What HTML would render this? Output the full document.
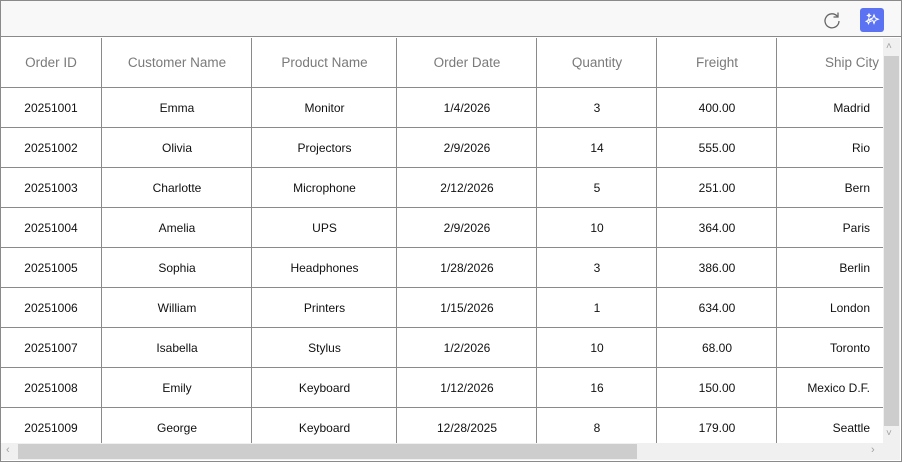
<!DOCTYPE html>
<html><head><style>
*{margin:0;padding:0;box-sizing:border-box}
body{width:902px;height:462px;background:#fff;font-family:"Liberation Sans",sans-serif;position:relative;overflow:hidden}
.frame{position:absolute;left:0;top:0;width:902px;height:462px;border:1px solid #8a8a8a}
.tb{position:absolute;left:1px;top:1px;width:900px;height:36px;background:#f8f8f8;border-bottom:1px solid #8a8a8a}
.grid{position:absolute;left:1px;top:38px;width:882px;height:405px;overflow:hidden}
.h{position:absolute;top:0;height:50px;line-height:50px;font-size:13.5px;color:#7a7a7a;text-align:center}
.c{position:absolute;height:40px;line-height:40px;font-size:12px;color:#111;text-align:center}
.vl{position:absolute;top:0;width:1px;height:405px;background:#8a8a8a}
.hl{position:absolute;left:0;width:882px;height:1px;background:#8a8a8a}
</style></head><body>
<div class="frame"></div>
<div class="tb">
<svg style="position:absolute;left:821px;top:9px" width="20" height="20" viewBox="0 0 20 20"><path d="M15.5 6.5A7 7 0 1 0 17 11" fill="none" stroke="#666" stroke-width="1.3"/><path d="M16 2.5v4.5h-4.5" fill="none" stroke="#666" stroke-width="1.3"/></svg>
<div style="position:absolute;left:859px;top:7px;width:24px;height:24px;background:#5b72f2;border-radius:3px"></div>
<svg style="position:absolute;left:859px;top:7px" width="24" height="24" viewBox="0 0 24 24" fill="none" stroke="#fff" stroke-width="1.1"><path d="M14 7l1.2 3 3 1.2-3 1.2-1.2 3-1.2-3-3-1.2 3-1.2z"/><path d="M8.5 11l.7 1.6 1.6.7-1.6.7-.7 1.6-.7-1.6-1.6-.7 1.6-.7z"/><path d="M9 6l.5 1 1 .5-1 .5-.5 1-.5-1-1-.5 1-.5z"/></svg>
</div>
<div class="grid" id="g"></div>
<div style="position:absolute;left:883px;top:38px;width:17px;height:405px;background:#f0f0f0"></div>
<div style="position:absolute;left:884px;top:56px;width:15px;height:370px;background:#cdcdcd"></div>
<div style="position:absolute;left:886px;top:41px;font-size:10px;color:#a0a0a0">&#708;</div>
<div style="position:absolute;left:886px;top:428px;font-size:10px;color:#a0a0a0">&#709;</div>
<div style="position:absolute;left:1px;top:443px;width:899px;height:17px;background:#f0f0f0"></div>
<div style="position:absolute;left:18px;top:444px;width:619px;height:15px;background:#cdcdcd"></div>
<div style="position:absolute;left:6px;top:444px;font-size:11px;color:#a0a0a0">&#8249;</div>
<div style="position:absolute;left:871px;top:444px;font-size:11px;color:#a0a0a0">&#8250;</div>
<script>
var g=document.getElementById('g');
var cols=[[0,100],[101,150],[251,145],[396,140],[536,120],[656,120],[776,120]];
var hd=['Order ID','Customer Name','Product Name','Order Date','Quantity','Freight','Ship City'];
var rows=[['20251001','Emma','Monitor','1/4/2026','3','400.00','Madrid'],['20251002','Olivia','Projectors','2/9/2026','14','555.00','Rio'],['20251003','Charlotte','Microphone','2/12/2026','5','251.00','Bern'],['20251004','Amelia','UPS','2/9/2026','10','364.00','Paris'],['20251005','Sophia','Headphones','1/28/2026','3','386.00','Berlin'],['20251006','William','Printers','1/15/2026','1','634.00','London'],['20251007','Isabella','Stylus','1/2/2026','10','68.00','Toronto'],['20251008','Emily','Keyboard','1/12/2026','16','150.00','Mexico D.F.'],['20251009','George','Keyboard','12/28/2025','8','179.00','Seattle']];
var h='';
for(var i=0;i<7;i++){
 var st=i==6?'left:776px;width:102px;text-align:right':'left:'+cols[i][0]+'px;width:'+cols[i][1]+'px';
 h+='<div class="h" style="'+st+'">'+hd[i]+'</div>';
 if(i>0)h+='<div class="vl" style="left:'+(cols[i][0]-1)+'px"></div>';
}
h+='<div class="hl" style="top:49px"></div>';
for(var r=0;r<rows.length;r++){
 var t=50+r*40;
 for(var i=0;i<7;i++){
  var st=i==6?'left:776px;width:93px;text-align:right':'left:'+cols[i][0]+'px;width:'+cols[i][1]+'px';
  h+='<div class="c" style="top:'+t+'px;'+st+'">'+rows[r][i]+'</div>';
 }
 h+='<div class="hl" style="top:'+(t+39)+'px"></div>';
}
g.innerHTML=h;
</script>
</body></html>
